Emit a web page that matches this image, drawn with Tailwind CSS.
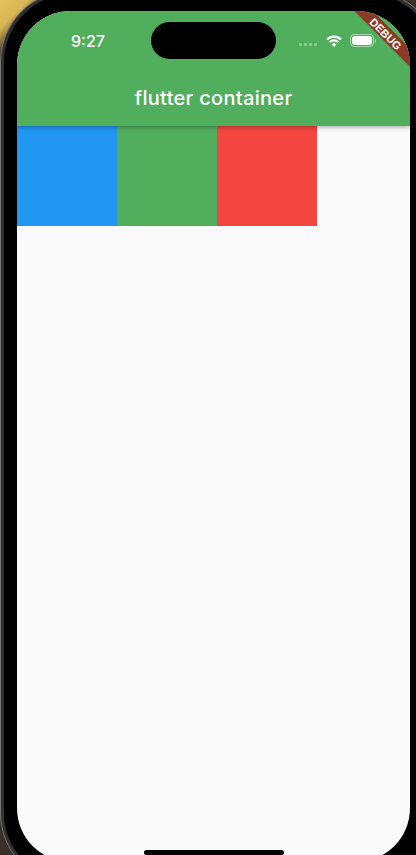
<!DOCTYPE html>
<html lang="en">
<head>
  <meta charset="UTF-8">
  <title>flutter container</title>
  <script src="https://cdn.jsdelivr.net/npm/@tailwindcss/browser@4"></script>
</head>
<body class="bg-[#3a322c] overflow-hidden">
  <div class="h-[855px] overflow-hidden bg-[linear-gradient(135deg,#e3c25f_0,#d9b655_20px,#3a302a_40px)]">
    <!-- device frame -->
    <div class="w-[440px] h-[895px] -mt-[10px] rounded-[72px] bg-[#303030] border border-[#777] p-[3px]">
      <div class="h-full rounded-[68px] bg-black pt-[17px] pl-[13px] w-[432px]">
        <!-- screen -->
        <div class="relative w-[393px] h-[851px] rounded-[54px] overflow-hidden bg-[#fafafa] font-['Inter',sans-serif]">
          <header class="relative z-10 h-[115px] bg-[#50ae5c] shadow-[0_2px_4px_rgba(0,0,0,0.25)] text-white">
            <div class="flex items-center h-[59px]">
              <span class="w-[134px] pl-[8px] text-center text-[16px] font-medium">9:27</span>
              <div class="w-[125px] h-[37px] rounded-full bg-black"></div>
              <div class="flex items-center ml-[23px]">
                <div class="flex gap-[2px] opacity-35 mt-[8px]">
                  <span class="w-[3px] h-[3px] rounded-[1px] bg-white"></span>
                  <span class="w-[3px] h-[3px] rounded-[1px] bg-white"></span>
                  <span class="w-[3px] h-[3px] rounded-[1px] bg-white"></span>
                  <span class="w-[3px] h-[3px] rounded-[1px] bg-white"></span>
                </div>
                <svg class="ml-[9px]" width="16" height="12" viewBox="0 0 16 12" fill="none" stroke="white" stroke-width="2.2">
                  <path d="M1 4.4a10 10 0 0 1 14 0"/>
                  <path d="M3.7 7.2a6.2 6.2 0 0 1 8.6 0"/>
                  <path d="M8 12 5.6 9.5a3.4 3.4 0 0 1 4.8 0z" fill="white" stroke="none"/>
                </svg>
                <div class="ml-[8px] w-[24px] h-[13px] rounded-[4px] border border-white/50 p-[1px]">
                  <div class="h-full w-full rounded-[3px] bg-white"></div>
                </div>
                <div class="ml-[1px] w-[1px] h-[4px] rounded-r-full bg-white/50"></div>
              </div>
            </div>
            <h1 class="text-center text-[20px] leading-[28px] font-[450] tracking-[0.3px] mt-[14px]">flutter container</h1>
          </header>

          <div class="flex">
            <div class="w-[100px] h-[100px] bg-[#2196f3]"></div>
            <div class="w-[100px] h-[100px] bg-[#50ae5c]"></div>
            <div class="w-[100px] h-[100px] bg-[#f44640]"></div>
          </div>

          <!-- debug banner -->
          <div class="absolute z-20 top-[16px] left-[319px] w-[100px] h-[13px] rotate-45 bg-[#8b3a28] text-center text-white text-[11px] leading-[15px] font-bold font-['Liberation_Sans',sans-serif]">DEBUG</div>

          <div class="absolute z-20 left-[127px] bottom-[7px] w-[140px] h-[5px] rounded-full bg-black"></div>
        </div>
      </div>
    </div>
  </div>
</body>
</html>
